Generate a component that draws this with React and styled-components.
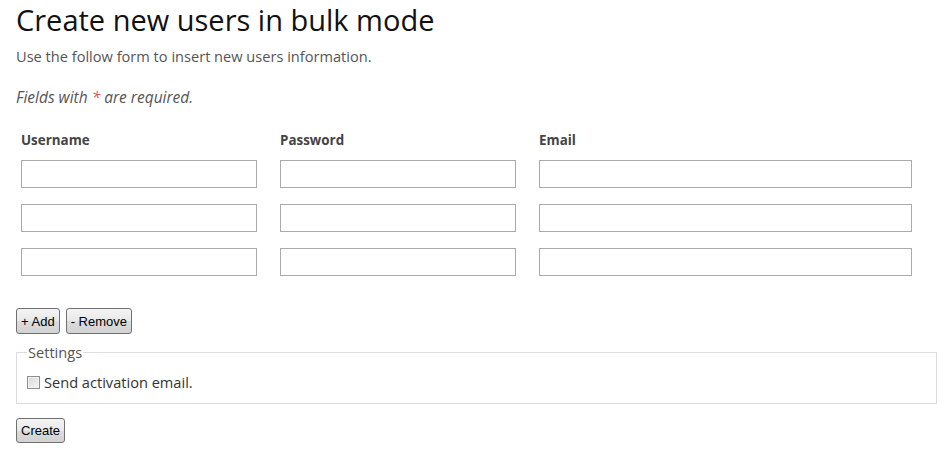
import React, { useState } from "react";
import styled, { createGlobalStyle } from "styled-components";

const GlobalStyle = createGlobalStyle`
  body {
    margin: 0;
    background: #fff;
    font-family: "Open Sans", "DejaVu Sans", sans-serif;
  }
`;

const Page = styled.div`
  padding: 0 15px 0 16px;
  display: flex;
  flex-direction: column;
  align-items: flex-start;
`;

const Title = styled.h1`
  margin: 0;
  font-size: 29px;
  font-weight: 400;
  line-height: 40px;
  color: #111;
`;

const Lead = styled.p`
  margin: 6px 0 0;
  font-size: 14.6px;
  line-height: 20px;
  color: #555;
`;

const Note = styled.p`
  margin: 21px 0 0;
  font-size: 15.5px;
  font-style: italic;
  line-height: 20px;
  color: #555;
`;

const Required = styled.span`
  color: #e05050;
`;

const UserGrid = styled.div`
  display: grid;
  grid-template-columns: 236px 236px 373px;
  column-gap: 23px;
  row-gap: 16px;
  margin: 24px 0 0 5px;
`;

const Label = styled.label`
  font-size: 13.4px;
  font-weight: 700;
  line-height: 18px;
  color: #444;
  margin-bottom: -5px;
`;

const TextInput = styled.input`
  box-sizing: border-box;
  width: 100%;
  height: 28px;
  margin: 0;
  border: 1px solid #aaa;
  background: #fff;
  padding: 0 4px;
  font-family: inherit;
  font-size: 13px;
  outline: none;
`;

const ButtonRow = styled.div`
  display: flex;
  gap: 6px;
  margin-top: 32px;
`;

const Button = styled.button`
  box-sizing: border-box;
  height: ${({ $tall }) => ($tall ? 26 : 25)}px;
  padding: 0 4px;
  border: 1px solid #707070;
  border-radius: 3px;
  background: linear-gradient(#f4f4f4, #e8e8e8 50%, #dcdcdc 51%, #d2d2d2);
  font-family: "Liberation Sans", Arial, sans-serif;
  font-size: 13px;
  color: #000;
  cursor: pointer;
`;

const Settings = styled.fieldset`
  box-sizing: border-box;
  align-self: stretch;
  margin: 9px 0 0;
  padding: 11px 10px 11px;
  border: 1px solid #ddd;
  min-width: 0;
`;

const Legend = styled.legend`
  padding: 0 1px;
  font-size: 14.6px;
  line-height: 18px;
  color: #555;
`;

const CheckRow = styled.label`
  display: flex;
  align-items: center;
  gap: 4px;
  font-size: 14.6px;
  line-height: 20px;
  color: #333;
`;

const Check = styled.input`
  appearance: none;
  box-sizing: border-box;
  width: 13px;
  height: 13px;
  margin: 0;
  border: 1px solid #8f8f8f;
  background: linear-gradient(135deg, #d8d8d8, #f6f6f6);
  box-shadow: inset 0 0 0 1px #f2f2f2;
  &:checked {
    background: #fff;
  }
`;

const CreateWrap = styled.div`
  margin-top: 14px;
`;

const columns = ["Username", "Password", "Email"];

export default function App() {
  const [rows, setRows] = useState([0, 1, 2]);

  return (
    <>
      <GlobalStyle />
      <Page>
        <Title>Create new users in bulk mode</Title>
        <Lead>Use the follow form to insert new users information.</Lead>
        <Note>
          Fields with <Required>*</Required> are required.
        </Note>
        <UserGrid>
          {columns.map((c) => (
            <Label key={c}>{c}</Label>
          ))}
          {rows.map((r) =>
            columns.map((c) => (
              <TextInput
                key={`${r}-${c}`}
                type={c === "Password" ? "password" : "text"}
              />
            ))
          )}
        </UserGrid>
        <ButtonRow>
          <Button $tall onClick={() => setRows([...rows, rows.length])}>
            + Add
          </Button>
          <Button
            $tall
            onClick={() => rows.length > 1 && setRows(rows.slice(0, -1))}
          >
            - Remove
          </Button>
        </ButtonRow>
        <Settings>
          <Legend>Settings</Legend>
          <CheckRow>
            <Check type="checkbox" />
            Send activation email.
          </CheckRow>
        </Settings>
        <CreateWrap>
          <Button>Create</Button>
        </CreateWrap>
      </Page>
    </>
  );
}
